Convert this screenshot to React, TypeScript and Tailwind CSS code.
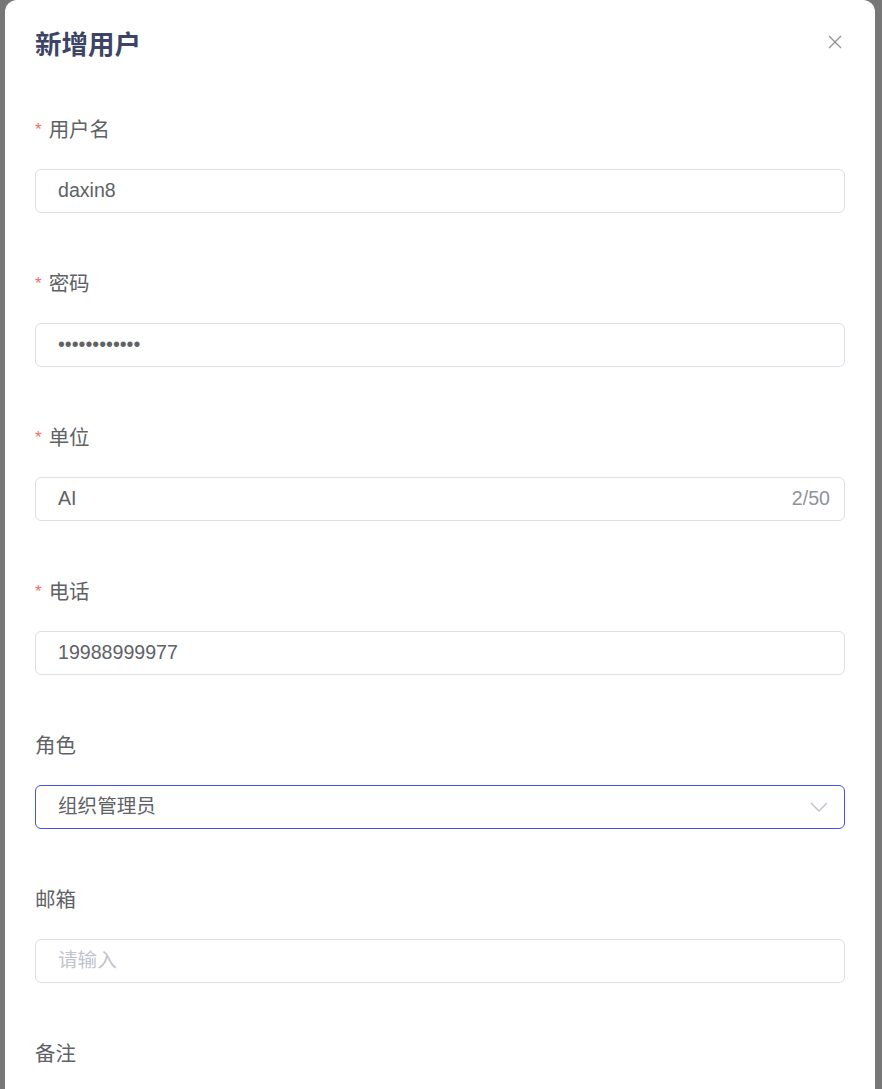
import React from "react";

const cjk = "font-['Liberation_Sans','Noto_Sans_CJK_SC',sans-serif]";

interface FieldProps {
  label: string;
  required?: boolean;
  children: React.ReactNode;
}

function Field({ label, required, children }: FieldProps) {
  return (
    <div className="mb-[59px]">
      <div className="h-[24px] leading-[24px] text-[20.5px] text-[#606266] flex items-center mb-[27px]">
        {required && <span className="text-[#f56c6c] mr-[7px] text-[17px]">*</span>}
        <span>{label}</span>
      </div>
      {children}
    </div>
  );
}

function TextBox({ value, placeholder, suffix, active }: { value?: string; placeholder?: string; suffix?: React.ReactNode; active?: boolean }) {
  return (
    <div
      className={
        "h-[44px] rounded-[6px] border flex items-center pl-[22px] pr-[14px] text-[19.6px] " +
        (active ? "border-[#4352e8]" : "border-[#dcdfe6]")
      }
    >
      <span className={"flex-1 " + (value ? "text-[#606266]" : "text-[#c0c4cc]")}>{value || placeholder}</span>
      {suffix}
    </div>
  );
}

export default function App() {
  return (
    <div className={"relative h-[1089px] w-[882px] overflow-hidden bg-[#777] " + cjk}>
      <div className="ml-[5px] w-[870px] min-h-[1089px] bg-white rounded-t-[12px]">
        <div className="flex items-center justify-between pt-[30px] pl-[30px] pr-[33px]">
          <h2 className="text-[26.5px] leading-[30px] font-bold text-[#3c4566]">新增用户</h2>
          <svg width="14" height="14" viewBox="0 0 14 14" className="-mt-[6px]">
            <path d="M1 1 L13 13 M13 1 L1 13" stroke="#909399" strokeWidth="1.3" />
          </svg>
        </div>
        <div className="px-[30px] pt-[58px]">
          <Field label="用户名" required>
            <TextBox value="daxin8" />
          </Field>
          <Field label="密码" required>
            <TextBox value="••••••••••••" />
          </Field>
          <Field label="单位" required>
            <TextBox value="AI" suffix={<span className="text-[#909399]">2/50</span>} />
          </Field>
          <Field label="电话" required>
            <TextBox value="19988999977" />
          </Field>
          <Field label="角色">
            <TextBox
              value="组织管理员"
              active
              suffix={
                <svg width="18" height="10" viewBox="0 0 18 10" className="mr-[2px]">
                  <path d="M1 1 L9 9 L17 1" fill="none" stroke="#c0c4cc" strokeWidth="1.5" />
                </svg>
              }
            />
          </Field>
          <Field label="邮箱">
            <TextBox placeholder="请输入" />
          </Field>
          <Field label="备注">
            <div className="h-[80px] rounded-[6px] border border-[#dcdfe6]" />
          </Field>
        </div>
      </div>
    </div>
  );
}
